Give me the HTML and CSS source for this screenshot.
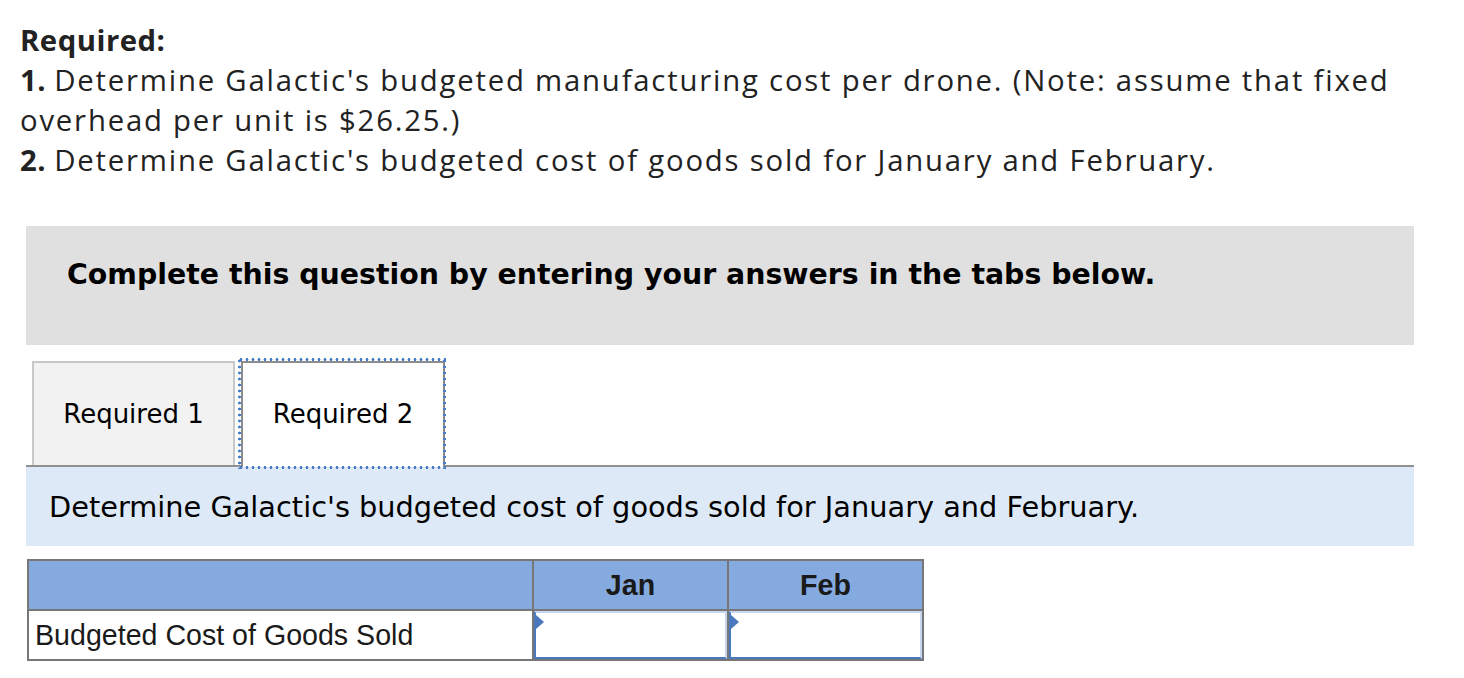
FILE: index.html
```html
<!DOCTYPE html>
<html>
<head>
<meta charset="utf-8">
<link rel="stylesheet" href="styles.css">
</head>
<body>
<div class="page">
  <div class="intro">
    <div class="req-title">Required:</div>
    <div><b class="num">1. </b><span>Determine Galactic's budgeted manufacturing cost per drone. (Note: assume that fixed</span><br><span>overhead per unit is $26.25.)</span></div>
    <div><b class="num">2. </b><span>Determine Galactic's budgeted cost of goods sold for January and February.</span></div>
  </div>

  <div class="banner">Complete this question by entering your answers in the tabs below.</div>

  <div class="tabs">
    <div class="tab">Required 1</div>
    <div class="tab active">Required 2</div>
  </div>

  <div class="prompt">Determine Galactic's budgeted cost of goods sold for January and February.</div>

  <table class="grid">
    <tr class="head">
      <th class="label-col"></th>
      <th class="val-col">Jan</th>
      <th class="val-col">Feb</th>
    </tr>
    <tr>
      <td class="label">Budgeted Cost of Goods Sold</td>
      <td class="input"><div class="box"><span class="flag"></span></div></td>
      <td class="input"><div class="box"><span class="flag"></span></div></td>
    </tr>
  </table>
</div>
</body>
</html>
```

FILE: styles.css
```css
html, body {
  margin: 0;
  padding: 0;
  background: #fff;
}
.page {
  padding: 20px 0 0 20px;
  width: 1394px;
}
.intro {
  font-family: "Open Sans", Lato, sans-serif;
  font-size: 29.3px;
  line-height: 40px;
  letter-spacing: 1.8px;
  color: #222;
  width: 1420px;
}
.intro .num {
  font-weight: 700;
  letter-spacing: 0.5px;
}
.req-title {
  font-weight: 700;
  letter-spacing: 0.5px;
}
.banner {
  margin: 46px 0 0 6px;
  background: #e0e0e0;
  height: 119px;
  box-sizing: border-box;
  padding: 31px 0 0 41px;
  font-family: "DejaVu Sans", Verdana, sans-serif;
  font-weight: 700;
  font-size: 28.4px;
  line-height: 36px;
  color: #000;
}
.tabs {
  margin: 15px 0 0 6px;
  display: flex;
  align-items: flex-end;
  gap: 6px;
  padding-left: 6px;
  border-bottom: 2px solid #909090;
  height: 105px;
}
.tab {
  box-sizing: border-box;
  height: 104px;
  display: flex;
  align-items: center;
  justify-content: center;
  font-family: "DejaVu Sans", Verdana, sans-serif;
  font-size: 26px;
  color: #000;
  background: #f2f2f2;
  border: 2px solid #c8c8c8;
  border-bottom: none;
  width: 203px;
}
.tab.active {
  background: #fff;
  border-color: #8c8c8c;
  width: 204px;
  height: 106px;
  margin-bottom: -2px;
  padding-bottom: 2px;
  position: relative;
  z-index: 1;
}
.tab.active::after {
  content: "";
  position: absolute;
  left: -5px;
  right: -3px;
  top: -5px;
  bottom: -2px;
  pointer-events: none;
  background:
    radial-gradient(circle, #4a7cc7 1.2px, transparent 1.7px) left top / 6px 3px repeat-x,
    radial-gradient(circle, #4a7cc7 1.2px, transparent 1.7px) left bottom / 6px 3px repeat-x,
    radial-gradient(circle, #4a7cc7 1.2px, transparent 1.7px) left top / 3px 6px repeat-y,
    radial-gradient(circle, #4a7cc7 1.2px, transparent 1.7px) right top / 3px 6px repeat-y;
}
.prompt {
  margin-left: 6px;
  background: #dde9f6;
  height: 79px;
  display: flex;
  align-items: center;
  padding-left: 23px;
  font-family: "DejaVu Sans", Verdana, sans-serif;
  font-size: 28.8px;
  color: #000;
}
.grid {
  margin: 13px 0 0 7px;
  border-collapse: collapse;
  font-family: "Liberation Sans", Arial, sans-serif;
  font-size: 28.6px;
  color: #1a1a1a;
}
.grid th, .grid td {
  border: 2px solid #777;
  padding: 0;
}
.grid .head th {
  background: #84aadf;
  height: 48px;
  font-weight: 700;
}
.label-col { width: 503px; }
.val-col { width: 193px; }
.grid .label {
  height: 48px;
  padding-left: 6px;
  text-align: left;
}
.grid .input {
  padding: 0;
  position: relative;
  height: 48px;
}
.box {
  box-sizing: border-box;
  height: 48px;
  border: 2px solid #4a78bf;
  border-top-color: #c7d6ee;
  border-right-color: #c7d6ee;
  position: relative;
  background: #fff;
}
.flag {
  position: absolute;
  left: 0;
  top: 2px;
  width: 0;
  height: 0;
  border-top: 7px solid transparent;
  border-bottom: 7px solid transparent;
  border-left: 8px solid #4a78bf;
}
```
